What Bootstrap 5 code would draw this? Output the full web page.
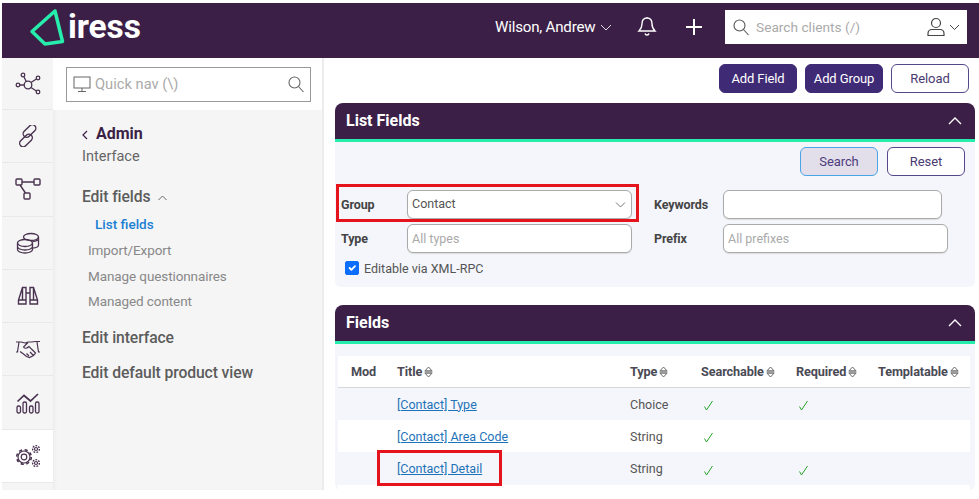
<!DOCTYPE html>
<html lang="en"><head><meta charset="utf-8"><title>Iress</title>
<link href="https://cdn.jsdelivr.net/npm/bootstrap@5.3.0/dist/css/bootstrap.min.css" rel="stylesheet">
<style>
html,body{height:100%;overflow:hidden;background:#fff}
body{font-family:Roboto,"Liberation Sans",sans-serif;font-size:13px;color:#555}
.app-shell{height:487px;margin:3px 0 0 2px;display:flex;flex-direction:column;overflow:hidden}
.top-bar{height:55px;flex:none;background:#3c1f47;color:#fff;display:flex;align-items:center;padding-bottom:7px}
.brand{display:flex;align-items:center;width:486px}
.brand svg{margin-left:27px;flex:none}
.brand-word{font-size:33.500px;font-weight:700;line-height:1;margin-left:3px;letter-spacing:-.1px;color:#fff}
.user-name{font-size:15.100px;letter-spacing:-.2px;width:105px;white-space:nowrap;margin-left:7px}
.bell-gap{margin-left:25px}
.plus-gap{margin-left:29px}
.top-search{width:242px;height:34px;margin-left:23px;background:#fff;display:flex;align-items:center;padding:0 7px 0 8px;color:#aaa;font-size:13.700px}
.search-word{margin-left:7px;flex-grow:1}
.body-row{flex:1;display:flex;min-height:0}
.rail{width:51px;flex:none;background:#f5f5f5}
.rail-item{height:53.300px;display:flex;align-items:center;justify-content:center;border-bottom:1px solid #e9e9e9}
.rail-item.first{height:52px}
.rail-item.on{background:#fff}
.side{width:271px;flex:none;background:#f5f5f5;border-right:2px solid #ececec;box-shadow:inset 4px 0 4px -3px #e9e9e9}
.side-top{height:52px;background:#fff;padding:9px 11px 0 13px}
.quick{height:35px;border:1px solid #999;display:flex;align-items:center;padding:0 6px;color:#aaa;font-size:14.700px;background:#fff}
.side-nav{padding:13px 0 0 29px}
.admin{font-size:16px;font-weight:700;color:#3c1f47;line-height:22px}
.sub-h{font-size:14.500px;line-height:24px;color:#666;margin-bottom:17px}
.nav-h{font-size:15.700px;font-weight:500;color:#5c5c5c;line-height:22px;letter-spacing:-.1px}
.nav-h.gap-a{margin-top:12px}
.nav-h.gap-b{margin-top:13px}
.nav-i{font-size:13.500px;color:#888;line-height:25.500px;padding-left:6px;letter-spacing:-.1px}
.nav-on{font-size:13.500px;font-weight:500;color:#1b7fd4;line-height:24px;padding-left:13px;margin-top:4px;margin-bottom:2px}
.main{flex:1;min-width:0;padding:6px 4px 0 11px;background:#fff}
.btn-bar{display:flex;justify-content:flex-end;gap:8px;padding-right:6px;height:39px;align-items:flex-start}
.ibtn{width:78px;height:29px;padding:0;font-size:13px;border-radius:6px;border:1.500px solid #3f2a75;line-height:26px;text-align:center;letter-spacing:-.1px}
.ibtn.solid{background:#3f2a75;color:#fff}
.ibtn.plain{background:#fff;color:#4a3a72;border-color:#56468a}
.ibtn.hit{background:#e2deea;color:#4d3d7c;border-color:#4aa4e8}
.pane{background:#f4f6fb;border-radius:8px 8px 6px 6px;overflow:hidden}
.pane-head{height:39px;background:#3c1f47;border-bottom:3px solid #27edac;color:#fff;display:flex;align-items:center;justify-content:space-between;padding:0 13px 0 11px;font-size:16px;font-weight:700}
.filter-pane{height:184px;margin-bottom:18px;overflow:visible}
.filter-pane .pane-head{border-radius:8px 8px 0 0}
.filter-btns{display:flex;justify-content:flex-end;gap:9px;padding:5px 10px 0 0;height:48px}
.filter-row{display:flex;align-items:center;padding-left:6px;position:relative;height:29px;margin-bottom:5px}
.f-lab{font-weight:700;font-size:12.500px;color:#444;letter-spacing:-.1px;padding-top:1px}
.f-lab.a{width:66px}.f-lab.b{width:69px;margin-left:22px}
.fbox{height:29px;width:225px;border:1px solid #aaa;border-radius:6px;background:#fff;display:flex;align-items:center;justify-content:space-between;padding:0 5px 0 4px;font-size:12.500px;color:#555;box-shadow:0 1px 1px #ddd}
.fbox.ph{color:#aaa;padding-top:1px}
.fbox.k1{width:219px}
.red-frame{position:absolute;border:3px solid #e5141c;pointer-events:none}
.rf1{left:1px;top:-6px;width:303px;height:38px}
.rf2{left:-12px;top:-2px;width:125px;height:36px}
.check-row{display:flex;align-items:center;gap:5px;padding-left:10px;font-size:12.500px;color:#555;margin-top:3px}
.check-word{padding-top:2px}
.check-row .form-check-input{margin:0;width:14px;height:14px;border-radius:2px;flex:none;background-color:#0d6efd;border-color:#0d6efd}
.grid-pane{padding:0;height:185px}
.fields-wrap{padding:12px 5px 0 3px}
.tbl{margin:0;--bs-table-bg:transparent;font-size:12.500px;table-layout:fixed;width:632px;color:#555}
.tbl th{background:#fff;height:31px;padding:0 0 0 8px;color:#4a4a55;font-weight:700;vertical-align:middle;border-bottom:1px solid #d8d8d8;white-space:nowrap;font-size:12.700px;letter-spacing:-.1px}
.tbl th.mod-col{padding-left:13px}
.tbl td{height:32.500px;padding:3px 0 0 8px;vertical-align:middle;border:0;color:#555}
.tbl tr.tint td{background:#f4f6fb}
.tbl tr.clear td{background:#fff}
.tbl a{color:#1e73b8}
.tbl th svg{margin-left:-1px;vertical-align:-2px}
.tick-ok{margin-left:2px}
.mark-cell{position:relative}
</style></head>
<body>
<svg width="0" height="0" class="position-absolute"><defs>
 <symbol id="sort-i" viewBox="0 0 9 12"><path d="M1 4.800L4.500 1 8 4.800zM1 7.200L4.500 11 8 7.200zM.5 6h8" fill="none" stroke="#666" stroke-width="1"/></symbol>
 <symbol id="tick-i" viewBox="0 0 11 11"><path d="M1.500 6.500L3.500 10 9.500 1" fill="none" stroke="#2aa32a" stroke-width="1"/></symbol>
</defs></svg>
<div class="app-shell">
 <header class="top-bar">
  <div class="brand">
   <svg width="36" height="38" viewBox="0 0 36 38" fill="none"><path d="M26 3L3 23.500L16 36L33.500 33.500Z" stroke="#27edac" stroke-width="3.500" stroke-linejoin="round"/></svg>
   <span class="brand-word">iress</span>
  </div>
  <span class="user-name">Wilson, Andrew</span>
  <svg width="12" height="7" viewBox="0 0 12 7" fill="none" stroke="#ddd" stroke-width="1"><path d="M1 1l5 5 5-5"/></svg>
  <svg class="bell-gap" width="20" height="22" viewBox="0 0 20 22" fill="none" stroke="#fff" stroke-width="1.400"><path d="M10 2c-3.500 0-5 2.500-5 6 0 3.500-1.500 5.500-3 7h16c-1.500-1.500-3-3.500-3-7 0-3.500-1.500-6-5-6zM10 1v1M8 17.500c.5 2 3.500 2 4 0"/></svg>
  <svg class="plus-gap" width="16" height="16" viewBox="0 0 16 16" stroke="#fff" stroke-width="2"><path d="M8 0v16M0 8h16"/></svg>
  <div class="top-search">
   <svg width="16" height="17" viewBox="0 0 16 17" fill="none" stroke="#555" stroke-width="1.100"><circle cx="6.500" cy="6.500" r="5.500"/><path d="M10.500 10.500l5 5.500"/></svg>
   <span class="search-word">Search clients (/)</span>
   <svg width="18" height="20" viewBox="0 0 18 20" fill="none" stroke="#444" stroke-width="1.200"><circle cx="9" cy="6" r="4.500"/><path d="M1 18.500v-2c0-2.500 2-4 4-4h8c2 0 4 1.500 4 4v2z"/></svg>
   <svg class="ms-1" width="11" height="7" viewBox="0 0 11 7" fill="none" stroke="#444"><path d="M1 1l4.500 4.500L10 1"/></svg>
  </div>
 </header>
 <div class="body-row">
  <nav class="rail">
   <div class="rail-item first"><svg width="26" height="24" viewBox="0 0 26 24" fill="none" stroke="#4a3350" stroke-width="1.300"><circle cx="13" cy="13" r="3.800"/><circle cx="3" cy="13" r="1.800"/><circle cx="8" cy="3" r="1.800"/><circle cx="23" cy="6" r="1.800"/><circle cx="23" cy="20" r="1.800"/><path d="M5 13h4.200M9 4.800l2.200 4.800M21.400 7L16 10.500M21.400 19L16 15.500"/></svg></div>
   <div class="rail-item"><svg width="22" height="22" viewBox="0 0 22 22" fill="none" stroke="#4a3350" stroke-width="1.400"><rect x="9" y="-1.500" width="7" height="15" rx="3.500" transform="rotate(45 12.500 6)"/><rect x="5.500" y="8" width="7" height="15" rx="3.500" transform="rotate(45 9 15.500)"/></svg></div>
   <div class="rail-item"><svg width="26" height="22" viewBox="0 0 26 22" fill="none" stroke="#4a3350" stroke-width="1.400"><rect x="1" y="1" width="6" height="6" rx="1"/><rect x="19" y="1" width="6" height="6" rx="1"/><rect x="9" y="15" width="6" height="6" rx="1"/><path d="M7 4h12M5 7l5.500 8"/></svg></div>
   <div class="rail-item"><svg width="24" height="22" viewBox="0 0 24 22" fill="none" stroke="#4a3350" stroke-width="1.300"><ellipse cx="15" cy="5" rx="7.500" ry="3.500"/><ellipse cx="9" cy="11" rx="7.500" ry="3.500"/><path d="M22.500 5v8c0 1.500-2 2.800-6 3.200M1.500 11v6.500c0 2 3.500 3.500 7.500 3.500s7.500-1.500 7.500-3.500V11M1.500 14.500c0 2 3.500 3.500 7.500 3.500s7.500-1.500 7.500-3.500M16.500 9.500c3.500-.2 6-1.500 6-3"/></svg></div>
   <div class="rail-item"><svg width="22" height="20" viewBox="0 0 22 20" fill="none" stroke="#4a3350" stroke-width="1.400"><path d="M5.500 1.500h3.500v16.500H1.500v-4zM13 18V1.500h3.500l4 12.500v4zM9 7h4M1.500 14H9M13 14h7.500M5.500 1.500v12.500M16.500 1.500v12.500"/></svg></div>
   <div class="rail-item"><svg width="26" height="20" viewBox="0 0 26 20" fill="none" stroke="#4a3350" stroke-width="1.200"><path d="M1 3h5l4 1 3-1 4 0 3-.5h5M4 3l-1.500 10H1M22 3l1.500 10H25M13 3.500L8.500 8c1.500 2 3.500 1.500 5.500-.5l6.500 6.500-2 2.500-4 2-3-1-3-2.500-3.500-2.500M14 17l-2.500-2.500M18.500 16.500L15 13M20.500 14L17 10.500"/></svg></div>
   <div class="rail-item"><svg width="24" height="22" viewBox="0 0 24 22" fill="none" stroke="#4a3350" stroke-width="1.300"><rect x="1" y="14" width="3.500" height="7" rx="1.500"/><rect x="7" y="10" width="3.500" height="11" rx="1.500"/><rect x="13.500" y="14" width="3.500" height="7" rx="1.500"/><rect x="19.500" y="10" width="3.500" height="11" rx="1.500"/><path d="M1.500 9.500L8 3.500l6.500 5.500 7.500-7" stroke-width="1.700"/></svg></div>
   <div class="rail-item on"><svg width="26" height="24" viewBox="0 0 26 24" fill="none" stroke="#4a3350" stroke-width="1.200"><circle cx="9" cy="13" r="2.800"/><circle cx="9" cy="13" r="6"/><circle cx="9" cy="13" r="7.300" stroke-dasharray="3.200 2.600" stroke-width="1.600"/><circle cx="21" cy="5" r="1.500"/><circle cx="21" cy="5" r="3.400" stroke-dasharray="1.800 1.200" stroke-width="1.400"/><circle cx="21" cy="19" r="1.500"/><circle cx="21" cy="19" r="3.400" stroke-dasharray="1.800 1.200" stroke-width="1.400"/></svg></div>
  </nav>
  <aside class="side">
   <div class="side-top"><div class="quick">
    <svg width="18" height="17" viewBox="0 0 18 17" fill="none" stroke="#666"><rect x="1" y="1" width="16" height="11"/><path d="M9 12v3M5 15.500h8"/></svg>
    <span class="ms-1 flex-grow-1">Quick nav (\)</span>
    <svg width="16" height="17" viewBox="0 0 16 17" fill="none" stroke="#666" stroke-width="1.100"><circle cx="6.500" cy="6.500" r="5.500"/><path d="M10.500 10.500l5 5.500"/></svg>
   </div></div>
   <div class="side-nav">
    <div class="admin"><svg class="me-2" width="6" height="10" viewBox="0 0 6 10" fill="none" stroke="#3c1f47" stroke-width="1.200"><path d="M5 1L1 5l4 4"/></svg>Admin</div>
    <div class="sub-h">Interface</div>
    <div class="nav-h">Edit fields <svg class="ms-1" width="9" height="6" viewBox="0 0 9 6" fill="none" stroke="#666"><path d="M.5 5L4.500 1l4 4"/></svg></div>
    <div class="nav-on">List fields</div>
    <div class="nav-i">Import/Export</div>
    <div class="nav-i">Manage questionnaires</div>
    <div class="nav-i">Managed content</div>
    <div class="nav-h gap-a">Edit interface</div>
    <div class="nav-h gap-b">Edit default product view</div>
   </div>
  </aside>
  <main class="main">
   <div class="btn-bar">
    <button class="ibtn solid">Add Field</button><button class="ibtn solid">Add Group</button><button class="ibtn plain">Reload</button>
   </div>
   <section class="pane filter-pane">
    <div class="pane-head"><span>List Fields</span><svg width="14" height="8" viewBox="0 0 14 8" fill="none" stroke="#fff" stroke-width="1.300"><path d="M1 7l6-6 6 6"/></svg></div>
    <div class="filter-btns"><button class="ibtn hit">Search</button><button class="ibtn plain">Reset</button></div>
    <div class="filter-row">
     <span class="f-lab a">Group</span>
     <div class="fbox"><span>Contact</span><svg width="11" height="6" viewBox="0 0 11 6" fill="none" stroke="#777"><path d="M1 .5l4.500 4.500L10 .5"/></svg></div>
     <span class="f-lab b">Keywords</span>
     <div class="fbox k1"></div>
     <div class="red-frame rf1"></div>
    </div>
    <div class="filter-row">
     <span class="f-lab a">Type</span>
     <div class="fbox ph">All types</div>
     <span class="f-lab b">Prefix</span>
     <div class="fbox ph">All prefixes</div>
    </div>
    <label class="check-row"><input class="form-check-input" type="checkbox" checked> <span class="check-word">Editable via XML-RPC</span></label>
   </section>
   <section class="pane grid-pane">
    <div class="pane-head"><span>Fields</span><svg width="14" height="8" viewBox="0 0 14 8" fill="none" stroke="#fff" stroke-width="1.300"><path d="M1 7l6-6 6 6"/></svg></div>
    <div class="fields-wrap">
     <table class="table tbl">
      <colgroup><col style="width:51px"><col style="width:233px"><col style="width:71px"><col style="width:95px"><col style="width:82px"><col></colgroup>
      <thead><tr>
       <th class="mod-col">Mod</th>
       <th>Title <svg width="9" height="12"><use href="#sort-i"/></svg></th>
       <th>Type <svg width="9" height="12"><use href="#sort-i"/></svg></th>
       <th>Searchable <svg width="9" height="12"><use href="#sort-i"/></svg></th>
       <th>Required <svg width="9" height="12"><use href="#sort-i"/></svg></th>
       <th>Templatable <svg width="9" height="12"><use href="#sort-i"/></svg></th>
      </tr></thead>
      <tbody>
       <tr class="tint"><td></td><td><a href="#">[Contact] Type</a></td><td>Choice</td><td><svg class="tick-ok" width="11" height="11"><use href="#tick-i"/></svg></td><td><svg class="tick-ok" width="11" height="11"><use href="#tick-i"/></svg></td><td></td></tr>
       <tr class="clear"><td></td><td><a href="#">[Contact] Area Code</a></td><td>String</td><td><svg class="tick-ok" width="11" height="11"><use href="#tick-i"/></svg></td><td></td><td></td></tr>
       <tr class="tint"><td></td><td class="mark-cell"><a href="#">[Contact] Detail</a><div class="red-frame rf2"></div></td><td>String</td><td><svg class="tick-ok" width="11" height="11"><use href="#tick-i"/></svg></td><td><svg class="tick-ok" width="11" height="11"><use href="#tick-i"/></svg></td><td></td></tr>
       <tr class="clear"><td></td><td></td><td></td><td></td><td></td><td></td></tr>
      </tbody>
     </table>
    </div>
   </section>
  </main>
 </div>
</div>
<script src="https://cdn.jsdelivr.net/npm/bootstrap@5.3.0/dist/js/bootstrap.bundle.min.js"></script>
</body></html>
